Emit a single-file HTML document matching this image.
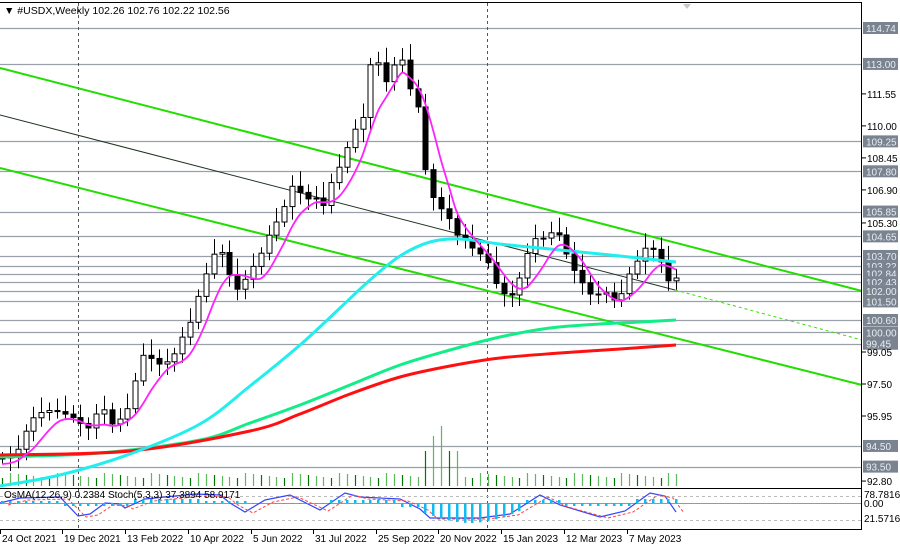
<!DOCTYPE html>
<html><head><meta charset="utf-8"><style>
html,body{margin:0;padding:0;background:#fff;width:900px;height:550px;overflow:hidden}
svg{display:block;font-family:"Liberation Sans",Tahoma,sans-serif}
</style></head><body>
<svg id="s" width="900" height="550" viewBox="0 0 900 550" xmlns="http://www.w3.org/2000/svg">
<rect width="900" height="550" fill="#fff"/>
<g id="grid"></g>
<g id="lines"></g>
<g id="vol"></g>
<g id="candles"></g>
<g id="ma"></g>
<g id="ind"></g>
<g id="axis"></g>
<text x="4" y="14" font-size="10.5" fill="#000">▼ #USDX,Weekly  102.26 102.76 102.22 102.56</text>
<polygon points="683,4 691,4 687,9" fill="#c8c8c8"/>
</svg>
<script>
const NS="http://www.w3.org/2000/svg";
function el(p,t,a,txt){const e=document.createElementNS(NS,t);for(const k in a)e.setAttribute(k,a[k]);if(txt!==undefined)e.textContent=txt;document.getElementById(p).appendChild(e);return e;}
const Y=p=>28+(114.74-p)*20.65;
el('axis','line',{x1:0,y1:2.5,x2:862,y2:2.5,stroke:'#000'});
el('axis','line',{x1:861.5,y1:2,x2:861.5,y2:530,stroke:'#000'});
el('axis','line',{x1:0,y1:488.5,x2:862,y2:488.5,stroke:'#000'});
el('axis','line',{x1:0,y1:529.5,x2:862,y2:529.5,stroke:'#000'});
const boxed=["114.74","113.00","109.25","107.80","105.85","104.65","103.70","103.22","102.84","102.43","102.00","101.50","100.60","100.00","99.45","94.50","93.50"];
boxed.forEach(s=>{const y=Math.round(Y(+s))+0.5;el('grid','line',{x1:0,y1:y,x2:862,y2:y,stroke:'#9aa0aa','stroke-width':1.3});});
boxed.forEach(s=>{const y=Y(+s);el('axis','rect',{x:863,y:y-6,width:35,height:12,fill:'#7a8491'});el('axis','text',{x:866,y:y+4,'font-size':'10',fill:'#e8ecf0'},s);});
["111.55","110.00","108.45","106.90","105.30","99.05","97.50","95.95","92.80"].forEach(s=>{const y=Y(+s);el('axis','line',{x1:862,y1:y,x2:866,y2:y,stroke:'#000'});el('axis','text',{x:867,y:y+4,'font-size':'10',fill:'#000'},s);});
[78,487].forEach(x=>el('grid','line',{x1:x+.5,y1:3,x2:x+.5,y2:530,stroke:'#555','stroke-dasharray':'3,3'}));
el('lines','line',{x1:0,y1:68,x2:862,y2:291,stroke:'#22dd00','stroke-width':2});
el('lines','line',{x1:0,y1:168,x2:862,y2:385,stroke:'#22dd00','stroke-width':2});
el('lines','line',{x1:0,y1:115,x2:675,y2:290,stroke:'#223322','stroke-width':1});
el('lines','line',{x1:675,y1:290,x2:862,y2:340,stroke:'#33dd00','stroke-width':1,'stroke-dasharray':'3,3'});
function smooth(pts){let d='M'+pts[0][0]+','+pts[0][1];for(let i=0;i<pts.length-1;i++){const p0=pts[Math.max(0,i-1)],p1=pts[i],p2=pts[i+1],p3=pts[Math.min(pts.length-1,i+2)];const c1=[p1[0]+(p2[0]-p0[0])/6,p1[1]+(p2[1]-p0[1])/6],c2=[p2[0]-(p3[0]-p1[0])/6,p2[1]-(p3[1]-p1[1])/6];d+=' C'+c1+' '+c2+' '+p2;}return d;}
function pl(pts,c,w){el('ma','path',{d:smooth(pts),fill:'none',stroke:c,'stroke-width':w,'stroke-linejoin':'round'});}
pl([[0,457],[100,453],[200,440],[250,423],[300,405],[350,385],[400,365],[450,350],[500,337],[550,328],[600,324],[640,322],[676,320]],'#11ee88',3);
pl([[0,455],[130,451],[250,431],[300,414],[350,394],[400,377],[450,366],[500,358],[560,353],[620,349],[676,345]],'#ff1010',3);
pl([[0,486],[60,475],[130,454],[200,424],[250,386],[300,345],[340,308],[370,280],[400,256],[430,242],[460,239],[500,244],[540,248],[580,252],[620,256],[676,262]],'#22eeee',3);
const K=[[2,458],[15,455],[22,440],[30,420],[45,410],[60,412],[78,420],[85,430],[93,425],[100,400],[110,425],[118,420],[125,416],[133,392],[140,358],[147,352],[155,365],[163,363],[172,360],[180,340],[188,330],[195,305],[203,282],[210,262],[218,245],[226,262],[234,292],[242,285],[250,270],[258,260],[266,240],[274,225],[282,215],[290,185],[298,190],[306,200],[314,195],[322,210],[330,185],[338,170],[346,150],[354,130],[362,122],[370,65],[378,62],[386,82],[394,65],[402,60],[410,90],[418,108],[426,175],[434,200],[442,210],[450,220],[458,238],[466,240],[474,250],[482,255],[490,265],[498,290],[506,295],[514,295],[522,270],[530,245],[538,235],[546,240],[554,228],[562,240],[570,265],[578,275],[586,290],[594,298],[602,290],[610,296],[618,305],[626,278],[634,268],[642,250],[650,245],[658,258],[666,270],[670,288],[676,278]];
function iy(x){for(let i=1;i<K.length;i++){if(x<=K[i][0]){const a=K[i-1],b=K[i];return a[1]+(b[1]-a[1])*(x-a[0])/(b[0]-a[0]);}}return K[K.length-1][1];}
let prev=iy(0),closes=[],xs=[];
for(let x=2,i=0;x<=677;x+=7.84,i++){
 const c=iy(x),o=prev;prev=c;closes.push(c);xs.push(x);
 const r1=6+((i*37)%11),r2=5+((i*53)%9);
 const hi=Math.min(o,c)-r1,lo=Math.max(o,c)+r2;
 const xx=Math.round(x)+.5;
 el('candles','line',{x1:xx,y1:hi,x2:xx,y2:lo,stroke:'#000'});
 const top=Math.min(o,c),h=Math.max(1,Math.abs(o-c));
 el('candles','rect',{x:xx-2.5,y:top,width:5,height:h,fill:c<o?'#fff':'#000',stroke:'#000','stroke-width':1});
 let vh=8+((i*29)%6);
 if(x>420&&x<460){vh=[35,50,60,35][Math.floor((x-420)/8)%4];}
 el('vol','line',{x1:xx,y1:486,x2:xx,y2:486-vh,stroke:i%3?'#5cb85c':'#007700','stroke-width':1.2});
}
const m=[];for(let i=0;i<closes.length;i++){let s=0,n=0;for(let j=Math.max(0,i-4);j<=i;j++){s+=closes[j];n++;}m.push([xs[i],s/n+6]);}
pl(m,'#ff22ff',1.8);
el('ind','line',{x1:0,y1:496.5,x2:862,y2:496.5,stroke:'#bbb','stroke-dasharray':'3,3'});
el('ind','line',{x1:0,y1:520.5,x2:862,y2:520.5,stroke:'#bbb','stroke-dasharray':'3,3'});
el('ind','line',{x1:0,y1:503.5,x2:862,y2:503.5,stroke:'#999'});
const S=[[0,503],[20,498],[60,497],[78,516],[90,514],[105,503],[120,504],[125,508],[145,499],[195,494],[220,495],[230,503],[245,512],[265,500],[290,495],[320,510],[345,493],[360,497],[400,499],[420,509],[430,518],[480,518],[510,514],[540,495],[560,505],[600,517],[625,511],[650,493],[665,496],[676,512]];
el('ind','polyline',{points:S.map(p=>p.join(',')).join(' '),fill:'none',stroke:'#3344ff','stroke-width':1.2});
el('ind','polyline',{points:S.map(p=>[p[0]+8,p[1]+(p[1]>505?1:2)].join(',')).join(' '),fill:'none',stroke:'#ff4444','stroke-width':1,'stroke-dasharray':'3,2'});
for(let x=2;x<=677;x+=7.84){const xx=Math.round(x);let h;
 if(x<60)h=-2;else if(x<130)h=3;else if(x<200)h=-4;else if(x<250)h=-2;else if(x<330)h=1;else if(x<400)h=-3;else if(x<420)h=4;else if(x<520)h=8+Math.sin((x-420)/100*Math.PI)*12;else if(x<560)h=-3;else if(x<630)h=3;else h=-4;
 el('ind','rect',{x:xx-1,y:h>0?503:503+h,width:2.5,height:Math.abs(h),fill:'#11bbee'});}
el('ind','text',{x:4,y:498,'font-size':'10',fill:'#000'},'OsMA(12,26,9) 0.2384  Stoch(5,3,3) 37.3894 58.9171');
el('axis','text',{x:864,y:498,'font-size':'10',fill:'#000'},'78.7816');
el('axis','text',{x:864,y:507,'font-size':'10',fill:'#000'},'0.00');
el('axis','text',{x:864,y:522,'font-size':'10',fill:'#000'},'21.5716');
const D=[[0,"24 Oct 2021"],[62,"19 Dec 2021"],[125,"13 Feb 2022"],[188,"10 Apr 2022"],[251,"5 Jun 2022"],[313,"31 Jul 2022"],[376,"25 Sep 2022"],[438,"20 Nov 2022"],[501,"15 Jan 2023"],[564,"12 Mar 2023"],[627,"7 May 2023"]];
D.forEach(([x,t])=>{el('axis','line',{x1:x+.5,y1:530,x2:x+.5,y2:534,stroke:'#000'});el('axis','text',{x:x+2,y:542,'font-size':'10',fill:'#000'},t);});
</script>
</body></html>
